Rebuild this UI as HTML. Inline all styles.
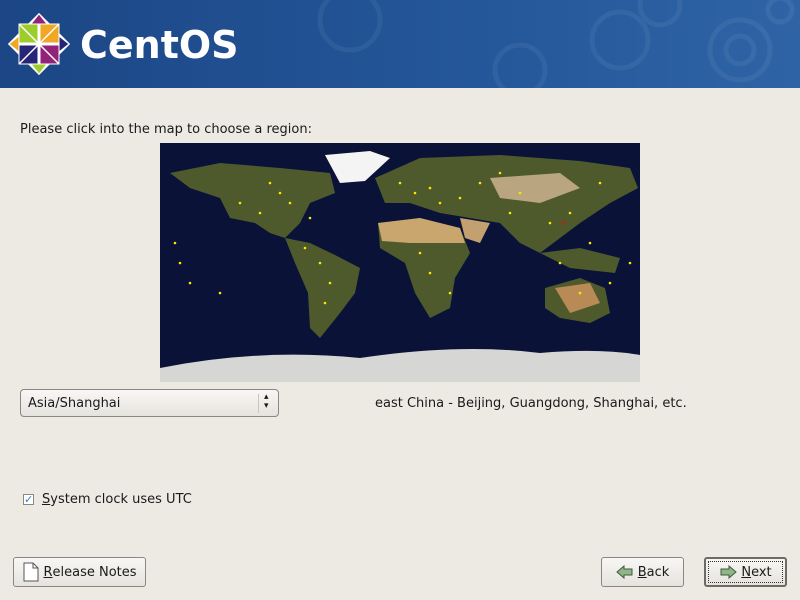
<!DOCTYPE html>
<html><head><meta charset="utf-8"><style>
body{margin:0;width:800px;height:600px;background:#edeae4;font-family:"DejaVu Sans","Liberation Sans",sans-serif;font-size:13px;color:#1a1a1a;position:relative;overflow:hidden}
.hdr{position:absolute;left:0;top:0;width:800px;height:88px;background:linear-gradient(90deg,#1c4685,#24579a 60%,#2e64a6)}
.a{position:absolute}
.btn{position:absolute;border:1px solid #8a8680;border-radius:3px;background:linear-gradient(#f8f7f5,#e6e3de);height:28px;box-sizing:border-box;display:flex;align-items:center;justify-content:center}
u{text-decoration:underline}
</style></head><body>
<div class="hdr">
<svg class="a" style="left:0;top:0" width="800" height="88">
<g fill="none" stroke="#fff" stroke-opacity=".06" stroke-width="5">
<circle cx="620" cy="40" r="28"/><circle cx="740" cy="50" r="30"/><circle cx="740" cy="50" r="14"/><circle cx="520" cy="70" r="25"/><circle cx="350" cy="20" r="30"/><circle cx="660" cy="5" r="20"/><circle cx="780" cy="10" r="12"/>
</g>
<g transform="translate(39,44)">
<g transform="rotate(45)">
<rect x="-22" y="-22" width="44" height="44" fill="#fff"/>
</g>
<rect x="-20" y="-20" width="19" height="19" fill="#9ccd2a" stroke="#fff" stroke-width="1"/>
<rect x="1" y="-20" width="19" height="19" fill="#efa724" stroke="#fff"/>
<rect x="-20" y="1" width="19" height="19" fill="#262577" stroke="#fff"/>
<rect x="1" y="1" width="19" height="19" fill="#932279" stroke="#fff"/>
<polygon points="0,-30 -8,-20 8,-20" fill="#932279" stroke="#fff"/>
<polygon points="0,30 -8,20 8,20" fill="#9ccd2a" stroke="#fff"/>
<polygon points="-30,0 -20,-8 -20,8" fill="#efa724" stroke="#fff"/>
<polygon points="30,0 20,-8 20,8" fill="#262577" stroke="#fff"/>
<path d="M-20-20L20 20M20-20L-20 20" stroke="#fff" stroke-width="1.5"/>
</g>
<text x="80" y="58" fill="#fff" font-family="DejaVu Sans,Liberation Sans,sans-serif" font-weight="bold" font-size="38">CentOS</text>
</svg>
</div>
<div class="a" style="left:20px;top:122px">Please click into the map to choose a region:</div>
<svg class="a" style="left:160px;top:143px" width="480" height="239" viewBox="0 0 480 239">
<rect width="480" height="239" fill="#0a1238"/>
<g fill="#4e5a2c">
<path d="M10 30 L60 20 L120 25 L170 30 L175 50 L150 60 L140 80 L125 95 L110 90 L95 80 L70 75 L60 55 L30 45 Z"/>
<path d="M125 95 L150 100 L175 112 L200 125 L195 150 L180 170 L160 195 L150 185 L148 150 L135 120 Z"/>
<path d="M215 35 L260 15 L340 12 L420 18 L470 25 L478 45 L450 60 L420 80 L400 95 L380 110 L360 100 L340 80 L310 75 L280 70 L250 60 L225 60 Z"/>
<path d="M218 80 L260 75 L300 85 L310 110 L295 135 L290 165 L270 175 L255 150 L245 120 L220 105 Z"/>
<path d="M385 145 L420 135 L445 145 L450 170 L430 180 L400 175 L385 165 Z"/>
<path d="M380 110 L420 105 L460 115 L455 130 L410 125 Z"/>
</g>
<path d="M218 80 L260 75 L300 85 L305 100 L250 100 L222 98 Z" fill="#c9a66e"/>
<path d="M300 75 L330 80 L320 100 L305 95 Z" fill="#c2a070"/>
<path d="M330 35 L400 30 L420 45 L380 60 L340 55 Z" fill="#b9a680"/>
<path d="M395 145 L430 140 L440 160 L410 170 Z" fill="#b88a55"/>
<path d="M165 12 L210 8 L230 15 L205 38 L180 40 Z" fill="#f4f4f4"/>
<path d="M0 225 Q100 205 200 215 Q300 200 380 210 Q440 205 480 212 L480 239 L0 239 Z" fill="#d6d6d4"/>
<g fill="#ffe600">
<circle cx="100" cy="70" r="1.3"/><circle cx="130" cy="60" r="1.3"/><circle cx="145" cy="105" r="1.3"/><circle cx="170" cy="140" r="1.3"/><circle cx="255" cy="50" r="1.3"/><circle cx="270" cy="45" r="1.3"/><circle cx="300" cy="55" r="1.3"/><circle cx="350" cy="70" r="1.3"/><circle cx="390" cy="80" r="1.3"/><circle cx="410" cy="70" r="1.3"/><circle cx="420" cy="150" r="1.3"/><circle cx="270" cy="130" r="1.3"/><circle cx="20" cy="120" r="1.3"/><circle cx="60" cy="150" r="1.3"/><circle cx="470" cy="120" r="1.3"/><circle cx="240" cy="40" r="1.3"/><circle cx="110" cy="40" r="1.3"/><circle cx="150" cy="75" r="1.3"/>
<circle cx="80" cy="60" r="1.3"/><circle cx="120" cy="50" r="1.3"/><circle cx="160" cy="120" r="1.3"/><circle cx="165" cy="160" r="1.3"/><circle cx="280" cy="60" r="1.3"/><circle cx="320" cy="40" r="1.3"/><circle cx="360" cy="50" r="1.3"/><circle cx="440" cy="40" r="1.3"/><circle cx="430" cy="100" r="1.3"/><circle cx="450" cy="140" r="1.3"/><circle cx="260" cy="110" r="1.3"/><circle cx="290" cy="150" r="1.3"/><circle cx="30" cy="140" r="1.3"/><circle cx="15" cy="100" r="1.3"/><circle cx="400" cy="120" r="1.3"/><circle cx="340" cy="30" r="1.3"/>
</g>
<text x="400" y="82" fill="#e01010" font-size="8">×</text>
</svg>
<div class="btn" style="left:20px;top:389px;width:259px;justify-content:flex-start;padding-left:7px;border-radius:4px">Asia/Shanghai
<span class="a" style="left:237px;top:4px;height:19px;border-left:1px solid #c8c4be"></span>
<span class="a" style="left:243px;top:3px;font-size:9px;line-height:9px">▴<br>▾</span></div>
<div class="a" style="left:375px;top:396px">east China - Beijing, Guangdong, Shanghai, etc.</div>
<div class="a" style="left:23px;top:494px;width:11px;height:11px;border:1px solid #8a8680;background:#fff;box-sizing:border-box;color:#3a76c8;font-size:11px;line-height:9px;text-align:center">✓</div>
<div class="a" style="left:42px;top:492px"><u>S</u>ystem clock uses UTC</div>
<div class="btn" style="left:13px;top:557px;width:133px;height:30px"><svg width="18" height="20" style="margin-right:3px"><path d="M2 1H11L16 6V19H2Z" fill="#fff" stroke="#555"/><path d="M11 1V6H16" fill="none" stroke="#555"/></svg><u>R</u>elease Notes</div>
<div class="btn" style="left:601px;top:557px;width:83px;height:30px"><svg width="18" height="14" style="margin-right:4px"><path d="M1 7L8 1V4H16V10H8V13Z" fill="#8fb58a" stroke="#3d5a3a"/></svg><u>B</u>ack</div>
<div class="btn" style="left:704px;top:557px;width:83px;height:30px;border:2px solid #6e6a64"><div class="a" style="left:2px;top:2px;right:2px;bottom:2px;border:1px dotted #333"></div><svg width="18" height="14" style="margin-right:4px"><path d="M17 7L10 1V4H2V10H10V13Z" fill="#8fb58a" stroke="#3d5a3a"/></svg><u>N</u>ext</div>
</body></html>
